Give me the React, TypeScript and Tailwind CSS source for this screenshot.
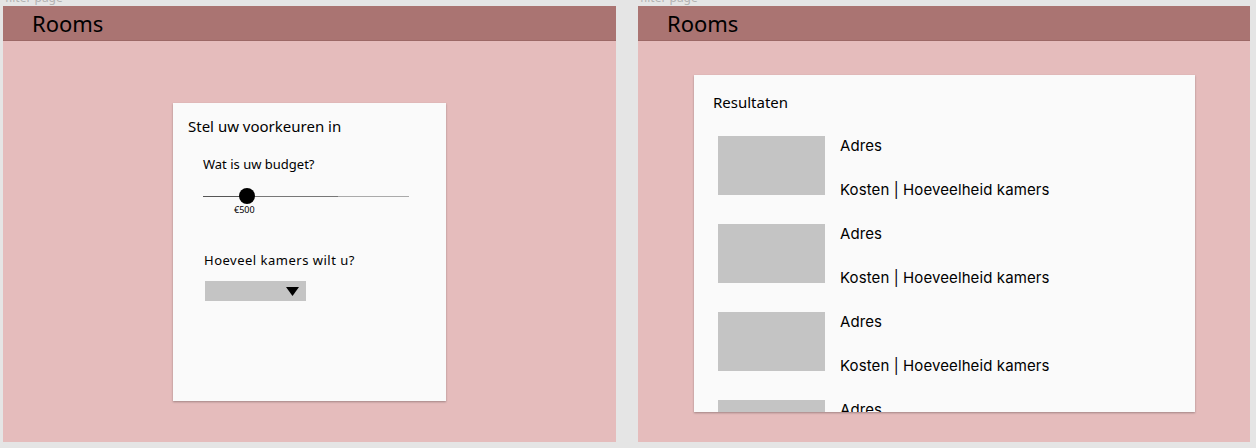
import React from 'react';

const rounded = { fontFamily: '"Noto Sans", "DejaVu Sans", sans-serif' };
const inter = { fontFamily: 'Inter, "Noto Sans", sans-serif' };

function Header() {
  return (
    <div className="flex h-[35px] shrink-0 items-center border-b border-[#9c6866] bg-[#aa7472] pl-[29px]">
      <span className="text-[22px] leading-none text-black" style={rounded}>Rooms</span>
    </div>
  );
}

function FilterCard() {
  return (
    <div className="flex h-[298px] w-[273px] flex-col bg-[#fafafa] pl-[15px] pt-[14px] shadow-[0_1px_2px_rgba(0,0,0,0.3)]" style={rounded}>
      <div className="text-[15px] leading-[18px] text-black">Stel uw voorkeuren in</div>
      <div className="mt-[22px] pl-[15px] text-[13px] leading-[15px] text-black">Wat is uw budget?</div>
      <div className="relative ml-[15px] mt-[16px] h-[16px] w-[206px]">
        <div className="absolute left-0 top-[8px] flex h-px w-full">
          <div className="w-[40px] bg-[#555]" />
          <div className="w-[95px] bg-[#777]" />
          <div className="flex-1 bg-[#aaa]" />
        </div>
        <div className="absolute left-[36px] top-0 h-[16px] w-[16px] rounded-full bg-black" />
      </div>
      <div className="ml-[46px] text-[9px] leading-[11px] text-black">€500</div>
      <div className="mt-[38px] pl-[16px] text-[13px] leading-[15px] tracking-[0.5px] text-black">Hoeveel kamers wilt u?</div>
      <div className="ml-[17px] mt-[13px] flex h-[20px] w-[101px] items-center justify-end bg-[#c4c4c4] pr-[7px]">
        <svg width="13" height="9" viewBox="0 0 13 9">
          <path d="M0 0 H13 L6.5 9 Z" fill="#000" />
        </svg>
      </div>
    </div>
  );
}

function ResultRow() {
  return (
    <div className="flex h-[88px] shrink-0 gap-[15px]">
      <div className="h-[59px] w-[107px] shrink-0 bg-[#c4c4c4]" />
      <div className="flex flex-col pt-[1px] text-[15px] leading-[18px] tracking-[0.1px] text-black" style={inter}>
        <span>Adres</span>
        <span className="mt-[26px]">Kosten | Hoeveelheid kamers</span>
      </div>
    </div>
  );
}

function ResultsCard() {
  return (
    <div className="flex h-[337px] w-[501px] flex-col overflow-hidden bg-[#fafafa] shadow-[0_1px_2px_rgba(0,0,0,0.3)]">
      <div className="pl-[19px] pt-[18px] text-[15px] leading-[18px] text-black" style={rounded}>Resultaten</div>
      <div className="mt-[25px] flex flex-col pl-[24px]">
        <ResultRow />
        <ResultRow />
        <ResultRow />
        <ResultRow />
      </div>
    </div>
  );
}

export default function App() {
  return (
    <div className="flex h-[448px] w-[1256px] overflow-hidden bg-[#e5e5e5]">
      <div className="ml-[3px] flex flex-col">
        <div className="-mt-[9px] h-[15px] pl-[2px] text-[12px] leading-[13px] text-[#b3b3b3]" style={rounded}>filter page</div>
        <div className="flex h-[436px] w-[613px] flex-col bg-[#e5bcbc]">
          <Header />
          <div className="pl-[170px] pt-[62px]">
            <FilterCard />
          </div>
        </div>
      </div>
      <div className="ml-[22px] flex flex-col">
        <div className="-mt-[9px] h-[15px] pl-[2px] text-[12px] leading-[13px] text-[#b3b3b3]" style={rounded}>filter page</div>
        <div className="flex h-[436px] w-[612px] flex-col bg-[#e5bcbc]">
          <Header />
          <div className="pl-[56px] pt-[34px]">
            <ResultsCard />
          </div>
        </div>
      </div>
    </div>
  );
}
